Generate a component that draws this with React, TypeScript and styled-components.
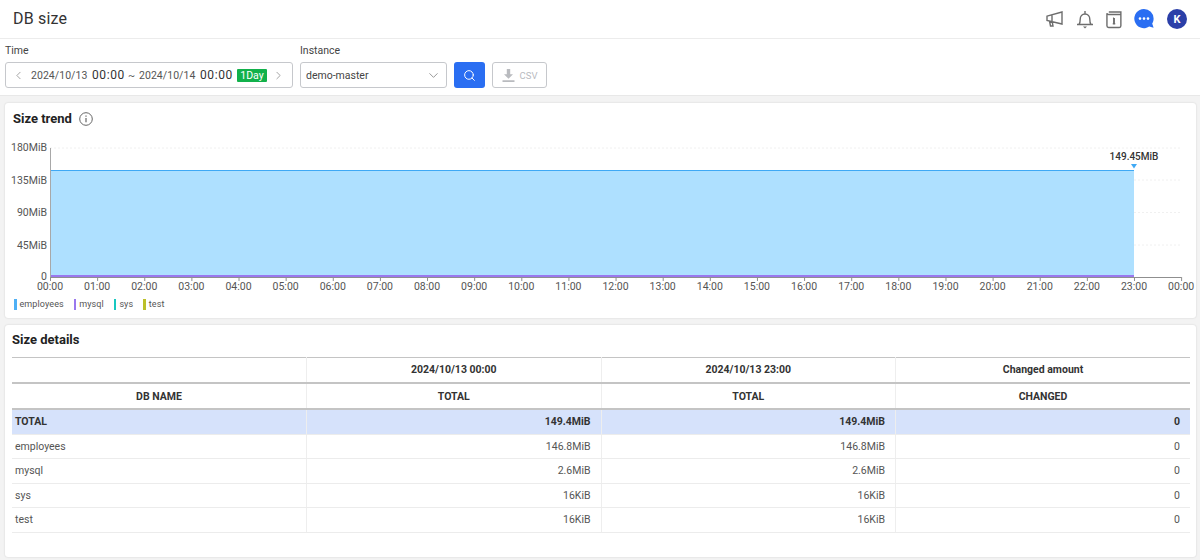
import React from 'react'
import styled, { createGlobalStyle } from 'styled-components'
import { ChevronDown, ChevronLeft, ChevronRight, Search } from 'lucide-react'

const GlobalStyle = createGlobalStyle`
  html, body {
    margin: 0;
    padding: 0;
    background: #f3f3f3;
    font-family: Roboto, "Noto Sans", sans-serif;
    color: #333;
  }
  * { box-sizing: border-box; }
`

const Page = styled.div`
  width: 1200px;
  height: 560px;
  overflow: hidden;
`

const Header = styled.header`
  height: 39px;
  background: #fff;
  border-bottom: 1px solid #ececec;
  display: flex;
  align-items: center;
  justify-content: space-between;
  padding: 0 13px 2px 13px;
`

const Title = styled.h1`
  margin: 0;
  font-size: 16px;
  font-weight: 400;
  letter-spacing: 0.2px;
  color: #333;
`

const HeaderIcons = styled.div`
  display: flex;
  align-items: center;
  gap: 12px;
  padding-top: 2px;
`

const FilterBar = styled.div`
  height: 57px;
  background: #fff;
  border-bottom: 1px solid #e8e8e8;
  display: flex;
  align-items: flex-end;
  gap: 7px;
  padding: 0 5px 7px;
`

const Field = styled.div`
  display: flex;
  flex-direction: column;
  gap: 4px;
`

const FieldLabel = styled.label`
  font-size: 10.5px;
  line-height: 14px;
  color: #444;
`

const DateBox = styled.div`
  width: 288px;
  height: 26px;
  border: 1px solid #c6c8cc;
  border-radius: 3px;
  display: flex;
  align-items: center;
  padding: 0 0 0 6px;
  font-size: 10.5px;
  letter-spacing: 0.05px;
  color: #555;
  white-space: nowrap;
  svg { flex-shrink: 0; }
`

const DateText = styled.span<{ $first?: boolean }>`
  margin-left: ${(p) => (p.$first ? 6 : 0)}px;
  width: 56px;
`

const Clock = styled.span`
  font-size: 12px;
  color: #333;
  width: 32px;
  margin: 0 4px 0 5px;
  letter-spacing: 0.6px;
`

const Tilde = styled.span`
  width: 11px;
`

const DayBadge = styled.span`
  background: #12b14b;
  color: #fff;
  font-size: 10.5px;
  height: 13px;
  line-height: 13px;
  width: 30px;
  flex-shrink: 0;
  text-align: center;
  border-radius: 1px;
  margin: 0 5px 0 1px;
`

const SelectBox = styled.div`
  width: 147px;
  height: 26px;
  border: 1px solid #c6c8cc;
  border-radius: 3px;
  display: flex;
  align-items: center;
  justify-content: space-between;
  padding: 0 5px 0 5px;
  font-size: 10.5px;
  color: #444;
`

const SearchButton = styled.button`
  width: 31px;
  height: 26px;
  border: none;
  border-radius: 3px;
  background: #2a6ef2;
  color: #fff;
  display: flex;
  align-items: center;
  justify-content: center;
  padding: 0;
`

const CsvButton = styled.button`
  width: 55px;
  height: 26px;
  border: 1px solid #c6c8cc;
  border-radius: 3px;
  background: #fff;
  color: #b9bbbf;
  display: flex;
  align-items: center;
  justify-content: center;
  gap: 5px;
  padding: 0;
  font-family: inherit;
  font-size: 9.5px;
`

const Card = styled.section<{ $height: number }>`
  width: 1191px;
  height: ${(p) => p.$height}px;
  margin: 7px 0 0 5px;
  background: #fff;
  border-radius: 3px;
  box-shadow: 0 0 2px rgba(0, 0, 0, 0.16);
`

const CardHeading = styled.div<{ $pad: string }>`
  display: flex;
  align-items: center;
  gap: 7px;
  padding: ${(p) => p.$pad};
`

const CardTitle = styled.h2`
  margin: 0;
  font-size: 13px;
  line-height: 16px;
  font-weight: 700;
  color: #222;
`

const ChartSvg = styled.svg`
  display: block;
  font-family: Roboto, sans-serif;
`

const Legend = styled.ul`
  list-style: none;
  margin: 0;
  padding: 0 0 0 9px;
  display: flex;
  gap: 10px;
  height: 14px;
`

const LegendItem = styled.li<{ $color: string }>`
  display: flex;
  align-items: center;
  font-size: 9px;
  color: #555;
  letter-spacing: 0.1px;
  &::before {
    content: '';
    width: 2.5px;
    height: 11px;
    margin-right: 3px;
    background: ${(p) => p.$color};
  }
`

const TableWrap = styled.div`
  padding: 0 6px 0 7px;
`

const Table = styled.table`
  width: 100%;
  table-layout: fixed;
  border-collapse: collapse;
  border-top: 1px solid #c4c4c4;
  font-size: 10.5px;
`

const HeadCell = styled.th<{ $lower?: boolean }>`
  height: ${(p) => (p.$lower ? 26 : 25)}px;
  padding: ${(p) => (p.$lower ? '2px 0 0' : '0')};
  font-size: 10.5px;
  font-weight: 700;
  color: #333;
  text-align: center;
  border-bottom: 2px solid #c4c4c4;
  border-left: 1px solid #eeeeee;
  &:first-child { border-left: none; }
`

const Row = styled.tr<{ $total?: boolean }>`
  height: ${(p) => (p.$total ? 25.5 : 24.5)}px;
  background: ${(p) => (p.$total ? '#d6e2fb' : '#fff')};
  font-weight: ${(p) => (p.$total ? 700 : 400)};
  color: ${(p) => (p.$total ? '#333' : '#555')};
`

const Cell = styled.td<{ $left?: boolean }>`
  padding: ${(p) => (p.$left ? '0 0 0 3px' : '0 10px 0 0')};
  text-align: ${(p) => (p.$left ? 'left' : 'right')};
  border-bottom: 1px solid #ececec;
  border-left: 1px solid #eeeeee;
  &:first-child { border-left: none; }
`

const Avatar = styled.div`
  width: 20px;
  height: 20px;
  margin-left: 1px;
  border-radius: 50%;
  background: #2b3fa8;
  color: #fff;
  display: flex;
  align-items: center;
  justify-content: center;
  font-size: 11px;
  font-weight: 700;
`

const hours = Array.from({ length: 25 }, (_, i) => `${String(i % 24).padStart(2, '0')}:00`)
const yTicks = [
  { label: '180MiB', y: 148, textY: 151 },
  { label: '135MiB', y: 180, textY: 183.5 },
  { label: '90MiB', y: 212.5, textY: 215.5 },
  { label: '45MiB', y: 245, textY: 248.5 },
  { label: '0', y: 277, textY: 279.5 },
]

const rows = [
  ['employees', '146.8MiB', '146.8MiB', '0'],
  ['mysql', '2.6MiB', '2.6MiB', '0'],
  ['sys', '16KiB', '16KiB', '0'],
  ['test', '16KiB', '16KiB', '0'],
]

// svg coordinates are page coordinates shifted by the card's origin
const Chart = () => {
  const x0 = 45
  const step = 47.13
  const shift = 132
  return (
    <ChartSvg width={1191} height={165} viewBox="0 0 1191 165">
      {yTicks.slice(0, 4).map((t) => (
        <line key={t.y} x1={x0} x2={1176} y1={t.y - shift} y2={t.y - shift} stroke="#f0f0f0" strokeDasharray="2 2" />
      ))}
      <rect x={x0} y={170 - shift} width={step * 23} height={107} fill="#aee0ff" />
      <line x1={x0} x2={x0 + step * 23} y1={170.5 - shift} y2={170.5 - shift} stroke="#3fa9f5" strokeWidth={1.2} />
      <rect x={x0} y={275 - shift} width={step * 23} height={2} fill="#9a78ee" />
      <line x1={x0 + 0.5} x2={x0 + 0.5} y1={148 - shift} y2={277 - shift} stroke="#a8a8a8" />
      <line x1={x0} x2={1176} y1={277.5 - shift} y2={277.5 - shift} stroke="#8f8f8f" />
      {hours.map((h, i) => {
        const x = x0 + step * i
        return (
          <g key={i}>
            <line x1={x + 0.5} x2={x + 0.5} y1={277 - shift} y2={281 - shift} stroke="#8f8f8f" />
            <text x={x} y={290 - shift} textAnchor="middle" fontSize={10.5} fill="#555">
              {h}
            </text>
          </g>
        )
      })}
      {yTicks.map((t) => (
        <text key={t.label} x={x0 - 3} y={t.textY - shift} textAnchor="end" fontSize={10.5} fill="#555">
          {t.label}
        </text>
      ))}
      <text x={x0 + step * 23} y={160 - shift} textAnchor="middle" fontSize={10} fontWeight={500} fill="#333">
        149.45MiB
      </text>
      <path d={`M${x0 + step * 23 - 3} ${164 - shift}h6l-3 4.5z`} fill="#3fa9f5" />
    </ChartSvg>
  )
}

const App = () => (
  <Page>
    <GlobalStyle />
    <Header>
      <Title>DB size</Title>
      <HeaderIcons>
        <svg width="18" height="18" viewBox="0 0 18 18" fill="none" stroke="#6d6d6d" strokeWidth="1.4">
          <path d="M1 6.2 16 2v12L1 10.5zM6 5v6.5M3.5 11l1 5h2.5l-.8-4.2" />
        </svg>
        <svg width="18" height="20" viewBox="0 0 18 20" fill="none" stroke="#6d6d6d" strokeWidth="1.4">
          <path d="M1 15.5h16M3 15.5c1.2-1.6 1.2-3.2 1.2-5.2 0-3 2-5.3 4.8-5.3s4.8 2.3 4.8 5.3c0 2 0 3.6 1.2 5.2M9 5V2" />
          <path d="M7 17.5h4L9 19.5z" fill="#6d6d6d" stroke="none" />
        </svg>
        <svg width="16" height="19" viewBox="0 0 17 19" fill="none" stroke="#6d6d6d" strokeWidth="1.5">
          <path d="M15.8 4.2H2.8A1.6 1.6 0 0 1 1 2.8v13.4c0 1 .7 1.8 1.8 1.8h11.4c1 0 1.6-.8 1.6-1.8V1.5H3" />
          <path d="M8.5 8v6" strokeWidth="2" />
          <path d="M7.2 14h2.6M7.4 8.2h1" />
        </svg>
        <svg width="20" height="20" viewBox="0 0 20 20">
          <path d="M10 0a9.6 9.6 0 0 1 9.6 9.6c0 1.9-.5 3.6-1.4 5l1.4 4.2-4.4-1.2A9.6 9.6 0 1 1 10 0z" fill="#2a6ef2" />
          <circle cx="6" cy="9.6" r="1.3" fill="#fff" />
          <circle cx="10" cy="9.6" r="1.3" fill="#fff" />
          <circle cx="14" cy="9.6" r="1.3" fill="#fff" />
        </svg>
        <Avatar>K</Avatar>
      </HeaderIcons>
    </Header>
    <FilterBar>
      <Field>
        <FieldLabel>Time</FieldLabel>
        <DateBox>
          <ChevronLeft size={13} color="#888" strokeWidth={1.4} />
          <DateText $first>2024/10/13</DateText>
          <Clock>00:00</Clock>
          <Tilde>~</Tilde>
          <DateText>2024/10/14</DateText>
          <Clock>00:00</Clock>
          <DayBadge>1Day</DayBadge>
          <ChevronRight size={13} color="#888" strokeWidth={1.4} />
        </DateBox>
      </Field>
      <Field>
        <FieldLabel>Instance</FieldLabel>
        <SelectBox>
          demo-master
          <ChevronDown size={15} color="#777" strokeWidth={1.2} />
        </SelectBox>
      </Field>
      <SearchButton aria-label="search">
        <Search size={13} strokeWidth={1.8} />
      </SearchButton>
      <CsvButton>
        <svg width="13" height="13" viewBox="0 0 13 13" fill="currentColor">
          <path d="M4.8 0h3.4v5.2H11L6.5 9.8 2 5.2h2.8zM.5 11.2h12V13H.5z" />
        </svg>
        CSV
      </CsvButton>
    </FilterBar>
    <Card $height={215}>
      <CardHeading $pad="8px 0 5px 8px">
        <CardTitle>Size trend</CardTitle>
        <svg width="14" height="14" viewBox="0 0 14 14" fill="none" stroke="#666" strokeWidth="1">
          <circle cx="7" cy="7" r="6.3" />
          <path d="M7 6v4.2" strokeWidth="1.2" />
          <path d="M7 3.6v1.2" strokeWidth="1.2" />
        </svg>
      </CardHeading>
      <Chart />
      <Legend>
        <LegendItem $color="#4fb0f5">employees</LegendItem>
        <LegendItem $color="#9a78ee">mysql</LegendItem>
        <LegendItem $color="#18c8c0">sys</LegendItem>
        <LegendItem $color="#bcc02a">test</LegendItem>
      </Legend>
    </Card>
    <Card $height={232}>
      <CardHeading $pad="7px 0 9px 7px">
        <CardTitle>Size details</CardTitle>
      </CardHeading>
      <TableWrap>
        <Table>
          <thead>
            <tr>
              <HeadCell />
              <HeadCell>2024/10/13 00:00</HeadCell>
              <HeadCell>2024/10/13 23:00</HeadCell>
              <HeadCell>Changed amount</HeadCell>
            </tr>
            <tr>
              <HeadCell $lower>DB NAME</HeadCell>
              <HeadCell $lower>TOTAL</HeadCell>
              <HeadCell $lower>TOTAL</HeadCell>
              <HeadCell $lower>CHANGED</HeadCell>
            </tr>
          </thead>
          <tbody>
            <Row $total>
              <Cell $left>TOTAL</Cell>
              <Cell>149.4MiB</Cell>
              <Cell>149.4MiB</Cell>
              <Cell>0</Cell>
            </Row>
            {rows.map((r) => (
              <Row key={r[0]}>
                <Cell $left>{r[0]}</Cell>
                <Cell>{r[1]}</Cell>
                <Cell>{r[2]}</Cell>
                <Cell>{r[3]}</Cell>
              </Row>
            ))}
          </tbody>
        </Table>
      </TableWrap>
    </Card>
  </Page>
)

export default App
